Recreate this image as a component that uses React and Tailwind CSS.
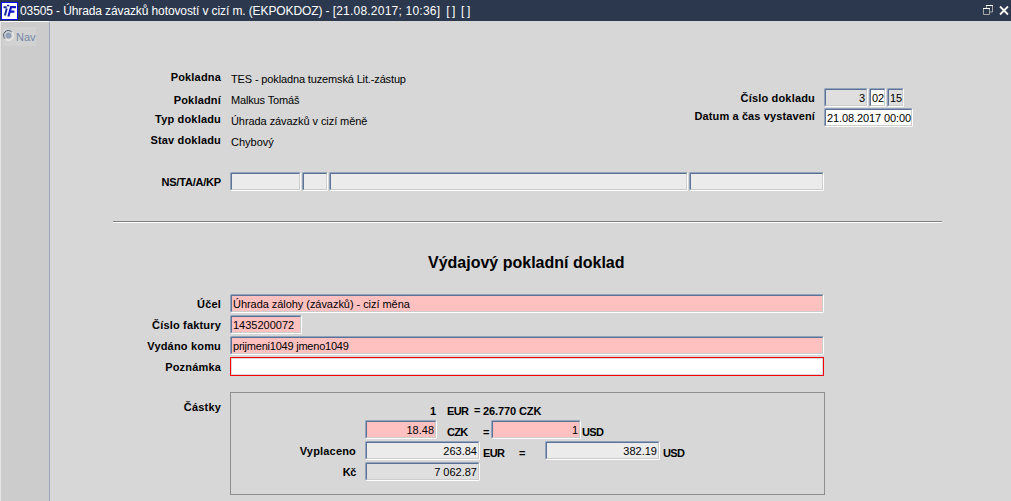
import React from 'react';

function Label({ className = '', tracking = 'tracking-[0.18px]', children }) {
  return (
    <div className={`shrink-0 text-right font-bold whitespace-nowrap ${tracking} ${className}`}>{children}</div>
  );
}

function Field({ className = '', children }) {
  return (
    <div className={`h-[19px] shrink-0 rounded-[2px] border border-t-[#93a3ba] border-l-[#93a3ba] border-r-white border-b-white ${className}`}>
      <div className="h-[17px] border border-t-[#5b7399] border-l-[#5b7399] border-r-[#cccccc] border-b-[#cccccc] px-px leading-[16px] whitespace-nowrap">
        {children}
      </div>
    </div>
  );
}

function TitleBar() {
  return (
    <header className="flex h-[21px] items-center bg-[#2b384e] text-white">
      <svg className="ml-px h-[18px] w-[17px] shrink-0" viewBox="0 0 17 18">
        <rect x="0.5" y="0.5" width="16" height="17" fill="#fff" stroke="#0a0af0" />
        <path d="M2.5 5.2h3.2M5.8 6.5L3.9 13.5" stroke="#1a2a9c" strokeWidth="2" fill="none" />
        <path d="M6 3.6h2.4" stroke="#1a2a9c" strokeWidth="1.6" />
        <path d="M15 5.2H10L7.4 14.5M8.8 9.6h4.6" stroke="#1414c8" strokeWidth="2.2" fill="none" />
      </svg>
      <h1 className="ml-[2px] flex text-[12px] whitespace-pre">
        <span className="tracking-[-0.11px]">03505 - Úhrada závazků hotovostí v cizí m. (EKPOKDOZ) - </span>
        <span className="tracking-[0.22px]">[21.08.2017; 10:36]</span>
        <span className="ml-[6px] tracking-[-0.4px]">[ ]</span>
        <span className="ml-[6px] tracking-[-0.4px]">[ ]</span>
      </h1>
      <svg className="mr-[1px] ml-auto h-[11px] w-[27px]" viewBox="0 0 27 11" fill="none">
        <path d="M3.5 3V1M9.5 1v6H7" stroke="#a8a8a8" />
        <path d="M3 0.5h7" stroke="#fff" />
        <path d="M0.5 4v5.5h6V4" stroke="#a8a8a8" />
        <path d="M0 3.5h7" stroke="#fff" />
        <path d="M17 1.5l8 8M25 1.5l-8 8" stroke="#f4f4ee" strokeWidth="1.8" />
      </svg>
    </header>
  );
}

function Sidebar() {
  return (
    <aside className="w-[50px] shrink-0 rounded-tr-[3px] border-t border-r border-l border-t-white border-r-[#98a5ba] border-l-[#e6e6e6] bg-[#cccccc] pt-[5px] pl-[2px]">
      <div className="flex h-[19px] w-[33px] items-center bg-[#d2d2d2] text-[11px] text-[#7486a6]">
        <svg className="-mt-[2px] h-[11px] w-[11px] shrink-0" viewBox="0 0 11 11" fill="none">
          <circle cx="5.5" cy="5.5" r="4.8" fill="#d8d8d8" stroke="#f4f4f4" />
          <path d="M2 8.8A4.7 4.7 0 0 1 8.8 2" stroke="#3e4a5e" />
          <circle cx="5.5" cy="5.5" r="3.1" fill="#93a1b8" />
        </svg>
        <span className="mt-px ml-[2px]">Nav</span>
      </div>
    </aside>
  );
}

const details = [
  { label: 'Pokladna', value: 'TES - pokladna tuzemská Lit.-zástup', row: 'h-[23px]', shift: 'pt-[2px] tracking-[-0.14px]' },
  { label: 'Pokladní', value: 'Malkus Tomáš', row: 'h-[19px]', shift: 'tracking-[-0.15px]' },
  { label: 'Typ dokladu', value: 'Úhrada závazků v cizí měně', row: 'h-[21px]', shift: 'pt-[2px] tracking-[-0.07px]' },
  { label: 'Stav dokladu', value: 'Chybový', row: 'h-[21px]', shift: 'pt-[2px]' },
];

function DocumentInfo() {
  return (
    <section className="flex h-[151px] pt-[49px]">
      <div className="w-[610px]">
        {details.map((item) => (
          <div key={item.label} className={`flex gap-[10px] leading-[14px] ${item.row}`}>
            <Label className="w-[171px]">{item.label}</Label>
            <div className={item.shift}>{item.value}</div>
          </div>
        ))}
      </div>
      <div className="pt-[18px]">
        <div className="flex h-[20px] gap-[9px]">
          <Label className="w-[155px] leading-[20px]">Číslo dokladu</Label>
          <div className="flex gap-px text-right">
            <Field className="w-[44px] bg-[#dfdfdf]">3</Field>
            <Field className="w-[17px] bg-white">02</Field>
            <Field className="w-[17px] bg-[#dfdfdf]">15</Field>
          </div>
        </div>
        <div className="flex gap-[9px]">
          <Label className="w-[155px] leading-[17px]" tracking="tracking-[0.12px]">Datum a čas vystavení</Label>
          <Field className="w-[89px] bg-white tracking-[-0.1px]">21.08.2017 00:00</Field>
        </div>
      </div>
    </section>
  );
}

function FormRow({ label, children }) {
  return (
    <div className="flex h-[21px] gap-[9px]">
      <Label className="w-[171px] leading-[20px]">{label}</Label>
      {children}
    </div>
  );
}

function Currency({ className = '', children }) {
  return <div className={`tracking-[-0.7px] ${className}`}>{children}</div>;
}

function Amounts() {
  return (
    <div className="flex gap-[9px]">
      <Label className="w-[171px] pt-[8px] leading-[14px]">Částky</Label>
      <div className="h-[103px] w-[595px] border border-[#8e8e8e] pt-[11px] font-bold">
        <div className="flex h-[16px] leading-[15px]">
          <div className="w-[205px] text-right">1</div>
          <Currency className="ml-[11px] w-[27px]">EUR</Currency>
          <div className="w-[9px] leading-[13px]">=</div>
          <div className="tracking-[-0.1px]">26.770 CZK</div>
        </div>
        <div className="flex h-[21px] leading-[24px]">
          <Field className="ml-[134px] w-[72px] bg-[#ffc0c0] text-right font-normal">18.48</Field>
          <Currency className="ml-[10px] w-[36px]">CZK</Currency>
          <div className="w-[8px]">=</div>
          <Field className="w-[90px] bg-[#ffc0c0] text-right font-normal">1</Field>
          <Currency className="ml-px">USD</Currency>
        </div>
        <div className="flex h-[21px] leading-[24px]">
          <Label className="w-[125px] leading-[20px]">Vyplaceno</Label>
          <Field className="ml-[9px] w-[115px] bg-[#ebebeb] text-right font-normal">263.84</Field>
          <Currency className="ml-[3px] w-[36px]">EUR</Currency>
          <div className="w-[26px]">=</div>
          <Field className="w-[115px] bg-[#ebebeb] text-right font-normal">382.19</Field>
          <Currency className="ml-[3px]">USD</Currency>
        </div>
        <div className="flex">
          <Label className="w-[125px] leading-[20px]" tracking="tracking-[-0.4px]">Kč</Label>
          <Field className="ml-[9px] w-[115px] bg-[#dfdfdf] text-right font-normal">7 062.87</Field>
        </div>
      </div>
    </div>
  );
}

function App() {
  return (
    <div className="flex h-[501px] w-[1011px] flex-col overflow-hidden bg-[#d7d7d7] font-['Liberation_Sans',Arial,sans-serif] text-[11px] text-black">
      <TitleBar />
      <div className="flex grow">
        <Sidebar />
        <main className="grow">
          <DocumentInfo />
          <div className="flex h-[49px] gap-[9px]">
            <Label className="w-[171px] leading-[20px]" tracking="tracking-[-0.2px]">NS/TA/A/KP</Label>
            <div className="flex gap-px">
              <Field className="w-[71px] bg-[#ebebeb]" />
              <Field className="w-[26px] bg-[#ebebeb]" />
              <Field className="w-[359px] bg-[#ebebeb]" />
              <Field className="w-[135px] bg-[#ebebeb]" />
            </div>
          </div>
          <div className="ml-[63px] h-[2px] w-[829px] border-t border-b border-t-[#808080] border-b-white" />
          <h2 className="h-[71px] pt-[28px] pl-[378px] text-[16px] leading-[24px] font-bold">
            Výdajový pokladní doklad
          </h2>
          <FormRow label="Účel">
            <Field className="w-[594px] bg-[#ffc0c0] tracking-[-0.05px]">Úhrada zálohy (závazků) - cizí měna</Field>
          </FormRow>
          <FormRow label="Číslo faktury">
            <Field className="w-[72px] bg-[#ffc0c0]">1435200072</Field>
          </FormRow>
          <FormRow label="Vydáno komu">
            <Field className="w-[594px] bg-[#ffc0c0] tracking-[-0.22px]">prijmeni1049 jmeno1049</Field>
          </FormRow>
          <div className="flex h-[35px] gap-[9px]">
            <Label className="w-[171px] leading-[20px]">Poznámka</Label>
            <div className="h-[19px] w-[594px] border border-[#ff0000] bg-white">
              <div className="h-[17px] border border-[#d8d8d8]" />
            </div>
          </div>
          <Amounts />
        </main>
      </div>
    </div>
  );
}

export default App;
